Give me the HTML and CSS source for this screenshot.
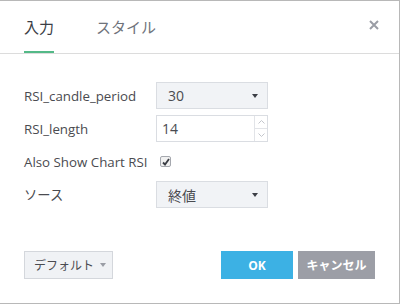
FILE: index.html
```html
<!DOCTYPE html>
<html lang="ja">
<head>
    <meta charset="UTF-8">
    <meta name="viewport" content="width=device-width, initial-scale=1.0">
    <title>RSI</title>
    <link rel="stylesheet" href="styles.css">
</head>
<body>
    <div class="dialog">
        <div class="header">
            <div class="tab active">入力</div>
            <div class="tab">スタイル</div>
            <div class="close">
                <svg width="10" height="10" viewBox="0 0 10 10"><path d="M1 1L9 9M9 1L1 9" stroke="#9a9da5" stroke-width="2"/></svg>
            </div>
        </div>

        <div class="content">
            <div class="row">
                <span class="label">RSI_candle_period</span>
                <div class="select"><span class="value">30</span><span class="caret"></span></div>
            </div>
            <div class="row">
                <span class="label">RSI_length</span>
                <div class="number">
                    <span class="value">14</span>
                    <div class="spin">
                        <div class="spin-btn"><svg width="7" height="4" viewBox="0 0 7 4"><path d="M0.5 3.5L3.5 0.5L6.5 3.5" stroke="#c3c6cc" fill="none"/></svg></div>
                        <div class="spin-btn"><svg width="7" height="4" viewBox="0 0 7 4"><path d="M0.5 0.5L3.5 3.5L6.5 0.5" stroke="#c3c6cc" fill="none"/></svg></div>
                    </div>
                </div>
            </div>
            <div class="row">
                <span class="label">Also Show Chart RSI</span>
                <span class="checkbox">
                    <svg width="8" height="8" viewBox="0 0 8 8"><path d="M1 4.5L3 6.5L7 1" stroke="#3a3d44" stroke-width="1.8" fill="none"/></svg>
                </span>
            </div>
            <div class="row">
                <span class="label">ソース</span>
                <div class="select"><span class="value src">終値</span><span class="caret"></span></div>
            </div>
        </div>

        <div class="footer">
            <div class="btn default">デフォルト <span class="caret grey"></span></div>
            <div class="spacer"></div>
            <div class="btn ok">OK</div>
            <div class="btn cancel">キャンセル</div>
        </div>
    </div>
</body>
</html>
```

FILE: styles.css
```css
* {
    margin: 0;
    padding: 0;
    box-sizing: border-box;
}

body {
    background-color: white;
    font-family: 'Open Sans', 'Noto Sans CJK JP', sans-serif;
    font-size: 13px;
    color: #4a4b50;
}

.dialog {
    width: 400px;
    height: 304px;
    border-top: 1px solid #b8b8b8;
    border-right: 1px solid #b8b8b8;
    border-bottom: 1px solid #b8b8b8;
    display: flex;
    flex-direction: column;
}

.header {
    height: 53px;
    border-bottom: 1px solid #dcdcdc;
    display: flex;
    align-items: stretch;
    padding-left: 24px;
    padding-right: 20px;
}

.tab {
    font-size: 15px;
    color: #6f737b;
    display: flex;
    align-items: center;
    margin-right: 42px;
    padding-top: 1px;
    border-bottom: 2px solid transparent;
}

.tab.active {
    color: #3b3e45;
    border-bottom-color: #53b987;
}

.close {
    margin-left: auto;
    display: flex;
    align-items: center;
    padding-bottom: 4px;
}

.content {
    padding: 28px 0 0 24px;
    display: flex;
    flex-direction: column;
    gap: 6px;
}

.row {
    height: 27px;
    display: flex;
    align-items: center;
}

.label {
    width: 132px;
    font-size: 13.3px;
}

.select {
    width: 112px;
    height: 27px;
    background-color: #f1f3f6;
    border: 1px solid #dadde2;
    display: flex;
    align-items: center;
    padding: 0 9px 0 11px;
    font-size: 14px;
}

.caret {
    margin-left: auto;
    width: 0;
    height: 0;
    border-left: 3.5px solid transparent;
    border-right: 3.5px solid transparent;
    border-top: 4px solid #3b3e45;
}

.caret.grey {
    border-top-color: #9a9da5;
    margin-left: 6px;
}

.number {
    width: 112px;
    height: 27px;
    border: 1px solid #dadde2;
    display: flex;
    align-items: center;
    padding-left: 5px;
    font-size: 14px;
}

.spin {
    margin-left: auto;
    width: 13px;
    height: 100%;
    border-left: 1px solid #e2e4e8;
    display: flex;
    flex-direction: column;
}

.spin-btn {
    flex: 1;
    display: flex;
    align-items: center;
    justify-content: center;
}

.spin-btn + .spin-btn {
    border-top: 1px solid #e2e4e8;
}

.checkbox {
    margin-left: 4px;
    width: 11px;
    height: 11px;
    border: 1px solid #a5a8ae;
    background-color: #f1f1f1;
    border-radius: 2px;
    display: flex;
    align-items: center;
    justify-content: center;
}

.footer {
    margin-top: auto;
    height: 28px;
    margin-bottom: 24px;
    padding: 0 24px;
    display: flex;
    gap: 5px;
}

.spacer {
    flex: 1;
}

.btn {
    height: 28px;
    display: flex;
    align-items: center;
    justify-content: center;
}

.btn.default {
    width: 89px;
    background-color: #f0f2f5;
    border: 1px solid #d4d7dc;
    font-size: 12px;
    color: #4a4b50;
    justify-content: flex-start;
    padding-left: 9px;
}

.btn.ok {
    width: 72px;
    background-color: #3cb1e4;
    color: white;
    font-weight: bold;
    font-size: 12px;
}

.btn.cancel {
    width: 77px;
    background-color: #9c9ea6;
    color: white;
    font-weight: bold;
    font-size: 12px;
}
```
